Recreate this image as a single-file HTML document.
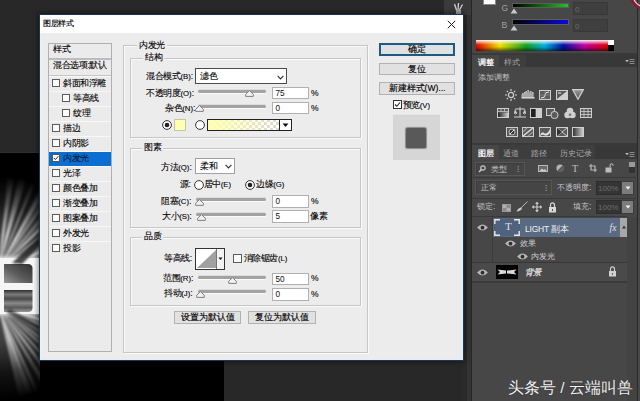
<!DOCTYPE html>
<html><head><meta charset="utf-8">
<style>
*{margin:0;padding:0;box-sizing:border-box}
html,body{width:640px;height:401px;overflow:hidden;background:#282828;font-family:"Liberation Sans",sans-serif;}
.a{position:absolute}
.t{position:absolute;white-space:nowrap;font-size:8.5px;line-height:9px;color:#000;font-weight:500;-webkit-text-stroke:0.1px #000;letter-spacing:-0.4px}
.k{font-size:7.8px;letter-spacing:0}
.p{position:absolute;white-space:nowrap;font-size:8.3px;line-height:9px;color:#c8c8c8;font-weight:500}
.gb{position:absolute;border:1px solid #c6c6c6;box-shadow:inset 1px 1px 0 #fafafa,1px 1px 0 #fafafa}
.gl{position:absolute;background:#ececec;padding:0 2px;font-size:8.5px;line-height:9px;color:#000;white-space:nowrap;font-weight:500;-webkit-text-stroke:0.1px #000;letter-spacing:-0.4px}
.cb{position:absolute;width:8px;height:8px;border:1px solid #5c5c5c;background:#fbfbfb}
.inp{position:absolute;background:#fff;border:1px solid #b0b0b0;font-size:8.2px;line-height:11.5px;padding-left:2.5px;color:#111}
.btn{position:absolute;background:#e1e1e1;border:1px solid #b2b2b2;font-size:8.5px;line-height:11px;text-align:center;color:#000;font-weight:500;-webkit-text-stroke:0.15px #000}
.trk{position:absolute;height:3px;background:#a6a6a6;border-radius:1px;box-shadow:0 1px 0 #fafafa}
</style></head><body>
<div class="a" style="left:0px;top:153px;width:224px;height:248px;background:#000"></div>
<div class="a" style="left:0px;top:152px;width:224px;height:1px;background:#303030"></div>
<svg class="a" style="left:0;top:152px" width="40" height="249" viewBox="0 152 40 249">
<defs>
<radialGradient id="rgu" cx="0" cy="268" r="92" gradientUnits="userSpaceOnUse">
<stop offset="0" stop-color="#fff" stop-opacity="1"/><stop offset="0.35" stop-color="#fff" stop-opacity="0.9"/>
<stop offset="0.7" stop-color="#fff" stop-opacity="0.3"/><stop offset="1" stop-color="#fff" stop-opacity="0"/></radialGradient>
<radialGradient id="rgl" cx="0" cy="308" r="92" gradientUnits="userSpaceOnUse">
<stop offset="0" stop-color="#fff" stop-opacity="1"/><stop offset="0.35" stop-color="#fff" stop-opacity="0.85"/>
<stop offset="0.7" stop-color="#fff" stop-opacity="0.25"/><stop offset="1" stop-color="#fff" stop-opacity="0"/></radialGradient>
<filter id="bl" x="-50%" y="-50%" width="200%" height="200%"><feGaussianBlur stdDeviation="1.0"/></filter>
<filter id="bl2" x="-50%" y="-50%" width="200%" height="200%"><feGaussianBlur stdDeviation="2"/></filter>
<linearGradient id="ub" x1="0" y1="1" x2="1" y2="0"><stop offset="0" stop-color="#9a9a9a"/><stop offset="0.45" stop-color="#5c5c5c"/><stop offset="1" stop-color="#303030"/></linearGradient>
<linearGradient id="lb" x1="0" y1="0" x2="0" y2="1"><stop offset="0" stop-color="#2e2e2e"/><stop offset="0.2" stop-color="#7a7a7a"/><stop offset="0.4" stop-color="#4a4a4a"/><stop offset="0.6" stop-color="#8a8a8a"/><stop offset="0.8" stop-color="#5a5a5a"/><stop offset="1" stop-color="#9a9a9a"/></linearGradient>
</defs>
<rect x="0" y="152" width="40" height="136" fill="url(#rgu)" opacity="0.3"/>
<rect x="0" y="288" width="40" height="113" fill="url(#rgl)" opacity="0.3"/>
<g filter="url(#bl)" fill="url(#rgu)"><path opacity="0.88" d="M-2 270L15.1 110.9L25.4 112.4Z"/><path opacity="0.88" d="M-2 270L32.8 113.8L45.3 117.2Z"/><path opacity="0.76" d="M-2 270L55.6 120.7L61.0 122.9Z"/><path opacity="0.96" d="M-2 270L72.1 128.2L81.3 133.4Z"/><path opacity="0.66" d="M-2 270L84.4 135.3L92.0 140.5Z"/><path opacity="0.56" d="M-2 270L97.9 145.0L105.6 151.6Z"/><path opacity="0.96" d="M-2 270L109.6 155.3L115.0 160.9Z"/><path opacity="0.91" d="M-2 270L122.7 169.7L126.8 175.1Z"/><path opacity="0.61" d="M-2 270L129.8 179.3L135.4 188.0Z"/><path opacity="0.64" d="M-2 270L136.0 189.0L141.9 200.0Z"/><path opacity="0.94" d="M-2 270L142.5 201.4L147.7 213.6Z"/></g>
<g filter="url(#bl)" fill="url(#rgl)"><path opacity="0.79" d="M-2 306L152.1 349.2L148.0 361.6Z"/><path opacity="0.97" d="M-2 306L145.0 369.2L142.0 375.7Z"/><path opacity="0.95" d="M-2 306L138.3 383.0L131.5 394.2Z"/><path opacity="0.62" d="M-2 306L129.1 397.8L124.1 404.5Z"/><path opacity="0.69" d="M-2 306L119.9 409.6L115.9 414.2Z"/><path opacity="0.86" d="M-2 306L107.6 422.5L103.5 426.3Z"/><path opacity="0.92" d="M-2 306L96.9 431.8L90.5 436.6Z"/><path opacity="0.77" d="M-2 306L83.3 441.3L76.4 445.5Z"/><path opacity="0.99" d="M-2 306L66.3 450.7L60.8 453.2Z"/><path opacity="0.93" d="M-2 306L57.1 454.7L46.3 458.5Z"/><path opacity="0.71" d="M-2 306L45.2 458.9L33.9 461.9Z"/></g>
<g filter="url(#bl2)"><rect x="-4" y="257" width="44" height="58" fill="#f4f4f4"/></g>
<rect x="0" y="258" width="39" height="56" fill="#f6f6f6"/>
<path d="M4 264H28Q32.5 264 32.5 268.5V283H4Z" fill="url(#ub)"/>
<path d="M4 290H32.5V307.5Q32.5 312 28 312H4Z" fill="url(#lb)"/>
<path d="M12 263L40 236L40 246L22 264Z" fill="#111" opacity="0.75" filter="url(#bl)"/>
<path d="M10 309L40 326L40 336L6 312Z" fill="#111" opacity="0.6" filter="url(#bl)"/>

</svg>
<div class="a" style="left:444px;top:0px;width:27px;height:15px;background:#3a3a3a"></div>
<div class="a" style="left:463px;top:15px;width:4px;height:386px;background:#2a2a2a"></div>
<div class="a" style="left:467px;top:15px;width:4px;height:386px;background:#333"></div>
<div class="a" style="left:471px;top:0px;width:1px;height:401px;background:#262626"></div>
<svg class="a" style="left:452px;top:2px" width="12" height="13"><path d="M4.5 8L2.5 2M6 8L6.5 1M7.5 8L10.5 2.5" stroke="#d0d0d0" stroke-width="1.3"/><rect x="4" y="8" width="5" height="5" fill="#a0a0a0"/></svg>
<div class="a" style="left:472px;top:0px;width:165px;height:401px;background:#474747"></div>
<div class="a" style="left:637px;top:0px;width:1px;height:401px;background:#2a2a2a"></div>
<div class="a" style="left:638px;top:0px;width:2px;height:401px;background:#484848"></div>
<div class="a" style="left:39px;top:14px;width:425px;height:347px;background:#ececec;border:1px solid #1d3550;box-shadow:0 0 5px 1px rgba(0,0,0,0.45),inset -1px -1px 0 #dfeef6,inset 1px 0 0 #e2f3f5"></div>
<div class="a" style="left:40px;top:15px;width:423px;height:18px;background:#fff"></div>
<div class="t" style="left:43px;top:19px;font-size:8.2px;-webkit-text-stroke:0.15px #000;color:#000">图层样式</div>
<svg class="a" style="left:447px;top:20px" width="9" height="9" viewBox="0 0 9 9"><path d="M0.8 0.8L8.2 8.2M8.2 0.8L0.8 8.2" stroke="#1a1a1a" stroke-width="1"/></svg>
<div class="a" style="left:48px;top:43px;width:64px;height:309px;background:#ebebeb;border:1px solid #b0b0b0"></div>
<div class="t" style="left:53px;top:45px;">样式</div>
<div class="a" style="left:49px;top:58px;width:62px;height:2px;background:#bcbcbc"></div>
<div class="t" style="left:53px;top:61px;">混合选项:默认</div>
<div class="a" style="left:49px;top:75px;width:62px;height:1px;background:#c6c6c6"></div>
<div class="a" style="left:49px;top:76px;width:62px;height:1px;background:#f8f8f8"></div>
<div class="cb" style="left:52px;top:79px;"></div>
<div class="t" style="left:63px;top:79px;">斜面和浮雕</div>
<div class="a" style="left:49px;top:91px;width:62px;height:1px;background:#f8f8f8"></div>
<div class="cb" style="left:62px;top:94px;"></div>
<div class="t" style="left:73px;top:94px;">等高线</div>
<div class="a" style="left:49px;top:106px;width:62px;height:1px;background:#f8f8f8"></div>
<div class="cb" style="left:62px;top:109px;"></div>
<div class="t" style="left:73px;top:109px;">纹理</div>
<div class="a" style="left:49px;top:121px;width:62px;height:1px;background:#f8f8f8"></div>
<div class="cb" style="left:52px;top:124px;"></div>
<div class="t" style="left:63px;top:124px;">描边</div>
<div class="a" style="left:49px;top:136px;width:62px;height:1px;background:#f8f8f8"></div>
<div class="cb" style="left:52px;top:139px;"></div>
<div class="t" style="left:63px;top:139px;">内阴影</div>
<div class="a" style="left:49px;top:151px;width:62px;height:1px;background:#f8f8f8"></div>
<div class="a" style="left:49px;top:152px;width:62px;height:14px;background:#0a6fd1"></div>
<svg class="a" style="left:52px;top:154px" width="8" height="8"><rect x="0.5" y="0.5" width="7" height="7" fill="#fff" stroke="#555"/><path d="M1.8 4L3.4 5.6L6.3 2.2" stroke="#333" stroke-width="1" fill="none"/></svg>
<div class="t" style="left:63px;top:154px;color:#062b55">内发光</div>
<div class="a" style="left:49px;top:166px;width:62px;height:1px;background:#f8f8f8"></div>
<div class="cb" style="left:52px;top:169px;"></div>
<div class="t" style="left:63px;top:169px;">光泽</div>
<div class="a" style="left:49px;top:181px;width:62px;height:1px;background:#f8f8f8"></div>
<div class="cb" style="left:52px;top:184px;"></div>
<div class="t" style="left:63px;top:184px;">颜色叠加</div>
<div class="a" style="left:49px;top:196px;width:62px;height:1px;background:#f8f8f8"></div>
<div class="cb" style="left:52px;top:199px;"></div>
<div class="t" style="left:63px;top:199px;">渐变叠加</div>
<div class="a" style="left:49px;top:211px;width:62px;height:1px;background:#f8f8f8"></div>
<div class="cb" style="left:52px;top:214px;"></div>
<div class="t" style="left:63px;top:214px;">图案叠加</div>
<div class="a" style="left:49px;top:226px;width:62px;height:1px;background:#f8f8f8"></div>
<div class="cb" style="left:52px;top:229px;"></div>
<div class="t" style="left:63px;top:229px;">外发光</div>
<div class="a" style="left:49px;top:241px;width:62px;height:1px;background:#f8f8f8"></div>
<div class="cb" style="left:52px;top:244px;"></div>
<div class="t" style="left:63px;top:244px;">投影</div>
<div class="gb" style="left:123px;top:45px;width:245px;height:308px"></div>
<div class="gl" style="left:137px;top:41px;">内发光</div>
<div class="gb" style="left:130px;top:58px;width:231px;height:80px"></div>
<div class="gl" style="left:143px;top:53px;">结构</div>
<div class="gb" style="left:130px;top:148px;width:231px;height:80px"></div>
<div class="gl" style="left:142px;top:143px;">图素</div>
<div class="gb" style="left:130px;top:237px;width:231px;height:69px"></div>
<div class="gl" style="left:142px;top:232px;">品质</div>
<div class="t" style="left:146px;top:72px;">混合模式<span class="k">(B)</span>:</div>
<div class="a" style="left:195px;top:68px;width:92px;height:16px;background:#fff;border:1px solid #4a4a4a"></div>
<div class="t" style="left:200px;top:72px;">滤色</div>
<svg class="a" style="left:277px;top:75px" width="7" height="5" viewBox="0 0 7 5"><path d="M0.6 0.9L3.5 3.8L6.4 0.9" stroke="#333" stroke-width="1.2" fill="none"/></svg>
<div class="t" style="left:146px;top:89px;">不透明度<span class="k">(O)</span>:</div>
<div class="a" style="left:198px;top:89.5px;width:68px;height:3px;background:#a2a2a2;border-radius:1.5px;box-shadow:0 1px 0 #fbfbfb,0 -1px 0 #dcdcdc"></div>
<svg class="a" style="left:245px;top:90px" width="9" height="7" viewBox="0 0 9 7"><path d="M4.5 0.6L8.3 4.2V6.4H0.7V4.2Z" fill="#f0f0f0" stroke="#808080" stroke-width="1" stroke-linejoin="round"/></svg>
<div class="inp" style="left:272px;top:87px;width:37px;height:12px">75</div>
<div class="t" style="left:311px;top:89px;">%</div>
<div class="t" style="left:165px;top:104px;">杂色<span class="k">(N)</span>:</div>
<div class="a" style="left:198px;top:104.5px;width:68px;height:3px;background:#a2a2a2;border-radius:1.5px;box-shadow:0 1px 0 #fbfbfb,0 -1px 0 #dcdcdc"></div>
<svg class="a" style="left:195px;top:105px" width="9" height="7" viewBox="0 0 9 7"><path d="M4.5 0.6L8.3 4.2V6.4H0.7V4.2Z" fill="#f0f0f0" stroke="#808080" stroke-width="1" stroke-linejoin="round"/></svg>
<div class="inp" style="left:272px;top:102px;width:37px;height:12px">0</div>
<div class="t" style="left:311px;top:104px;">%</div>
<svg class="a" style="left:162px;top:120px" width="10" height="10" viewBox="0 0 10 10"><circle cx="5" cy="5" r="4.4" fill="#fff" stroke="#333" stroke-width="1"/><circle cx="5" cy="5" r="2.3" fill="#222"/></svg>
<div class="a" style="left:174px;top:119px;width:12px;height:12px;background:#ffffb4;border:1px solid #c8c8a0"></div>
<svg class="a" style="left:195px;top:120px" width="10" height="10" viewBox="0 0 10 10"><circle cx="5" cy="5" r="4.4" fill="#fff" stroke="#333" stroke-width="1"/></svg>
<svg class="a" style="left:207px;top:119px" width="85" height="12" viewBox="0 0 85 12">
<defs><pattern id="ck" width="6" height="6" patternUnits="userSpaceOnUse"><rect width="6" height="6" fill="#fff"/><rect width="3" height="3" fill="#d8d8d8"/><rect x="3" y="3" width="3" height="3" fill="#d8d8d8"/></pattern>
<linearGradient id="yg" x1="0" x2="1"><stop offset="0" stop-color="#ffffb0" stop-opacity="1"/><stop offset="1" stop-color="#ffffb0" stop-opacity="0"/></linearGradient></defs>
<rect x="0.5" y="0.5" width="72" height="11" fill="url(#ck)"/><rect x="0.5" y="0.5" width="72" height="11" fill="url(#yg)"/>
<rect x="0.5" y="0.5" width="84" height="11" fill="none" stroke="#222"/>
<path d="M72.5 0.5V11.5" stroke="#222"/><rect x="73" y="1" width="11" height="10" fill="#fff"/>
<path d="M75.5 4.5H81.5L78.5 8Z" fill="#111"/></svg>
<div class="t" style="left:161px;top:163px;">方法<span class="k">(Q)</span>:</div>
<div class="a" style="left:195px;top:158px;width:40px;height:16px;background:#fff;border:1px solid #a0a0a0"></div>
<div class="t" style="left:200px;top:162px;">柔和</div>
<svg class="a" style="left:225px;top:164px" width="7" height="5" viewBox="0 0 7 5"><path d="M0.6 0.9L3.5 3.8L6.4 0.9" stroke="#333" stroke-width="1.2" fill="none"/></svg>
<div class="t" style="left:180px;top:180px;">源:</div>
<svg class="a" style="left:194px;top:180px" width="10" height="10" viewBox="0 0 10 10"><circle cx="5" cy="5" r="4.4" fill="#fff" stroke="#333" stroke-width="1"/></svg>
<div class="t" style="left:203.5px;top:180px;">居中<span class="k">(E)</span></div>
<svg class="a" style="left:245px;top:180px" width="10" height="10" viewBox="0 0 10 10"><circle cx="5" cy="5" r="4.4" fill="#fff" stroke="#333" stroke-width="1"/><circle cx="5" cy="5" r="2.3" fill="#222"/></svg>
<div class="t" style="left:256px;top:180px;">边缘<span class="k">(G)</span></div>
<div class="t" style="left:161px;top:197px;">阻塞<span class="k">(C)</span>:</div>
<div class="a" style="left:196px;top:197.7px;width:70px;height:3px;background:#a2a2a2;border-radius:1.5px;box-shadow:0 1px 0 #fbfbfb,0 -1px 0 #dcdcdc"></div>
<svg class="a" style="left:195px;top:199px" width="9" height="7" viewBox="0 0 9 7"><path d="M4.5 0.6L8.3 4.2V6.4H0.7V4.2Z" fill="#f0f0f0" stroke="#808080" stroke-width="1" stroke-linejoin="round"/></svg>
<div class="inp" style="left:272px;top:195px;width:37px;height:13px">0</div>
<div class="t" style="left:311px;top:196.5px;">%</div>
<div class="t" style="left:162px;top:212px;">大小<span class="k">(S)</span>:</div>
<div class="a" style="left:196px;top:212.7px;width:70px;height:3px;background:#a2a2a2;border-radius:1.5px;box-shadow:0 1px 0 #fbfbfb,0 -1px 0 #dcdcdc"></div>
<svg class="a" style="left:197px;top:214px" width="9" height="7" viewBox="0 0 9 7"><path d="M4.5 0.6L8.3 4.2V6.4H0.7V4.2Z" fill="#f0f0f0" stroke="#808080" stroke-width="1" stroke-linejoin="round"/></svg>
<div class="inp" style="left:272px;top:210px;width:37px;height:13px">5</div>
<div class="t" style="left:310px;top:212px;">像素</div>
<div class="t" style="left:164px;top:254px;">等高线:</div>
<svg class="a" style="left:195px;top:248px" width="30" height="22" viewBox="0 0 30 22">
<rect x="0.5" y="0.5" width="29" height="21" fill="#fff" stroke="#333"/>
<path d="M2 20L21 2V20Z" fill="#a0a0a0"/>
<rect x="21.5" y="1" width="7.5" height="20" fill="#f2f2f2"/><path d="M21.5 1V21" stroke="#777"/><path d="M23.5 9.5H27.5L25.5 12Z" fill="#111"/></svg>
<div class="cb" style="left:233px;top:254px;width:9px;height:9px"></div>
<div class="t" style="left:243.5px;top:254px;">消除锯齿<span class="k">(L)</span></div>
<div class="t" style="left:163px;top:274px;">范围<span class="k">(R)</span>:</div>
<div class="a" style="left:198px;top:275.5px;width:68px;height:3px;background:#a2a2a2;border-radius:1.5px;box-shadow:0 1px 0 #fbfbfb,0 -1px 0 #dcdcdc"></div>
<svg class="a" style="left:228px;top:277px" width="9" height="7" viewBox="0 0 9 7"><path d="M4.5 0.6L8.3 4.2V6.4H0.7V4.2Z" fill="#f0f0f0" stroke="#808080" stroke-width="1" stroke-linejoin="round"/></svg>
<div class="inp" style="left:272px;top:273px;width:37px;height:12px">50</div>
<div class="t" style="left:311px;top:274px;">%</div>
<div class="t" style="left:164px;top:289px;">抖动<span class="k">(J)</span>:</div>
<div class="a" style="left:198px;top:290px;width:68px;height:3px;background:#a2a2a2;border-radius:1.5px;box-shadow:0 1px 0 #fbfbfb,0 -1px 0 #dcdcdc"></div>
<svg class="a" style="left:196px;top:291px" width="9" height="7" viewBox="0 0 9 7"><path d="M4.5 0.6L8.3 4.2V6.4H0.7V4.2Z" fill="#f0f0f0" stroke="#808080" stroke-width="1" stroke-linejoin="round"/></svg>
<div class="inp" style="left:272px;top:288px;width:37px;height:13px">0</div>
<div class="t" style="left:311px;top:289.5px;">%</div>
<div class="btn" style="left:174px;top:311px;width:67px;height:13px">设置为默认值</div>
<div class="btn" style="left:248px;top:311px;width:68px;height:13px">复位为默认值</div>
<div class="btn" style="left:379px;top:43px;width:76px;height:13px;border:2px solid #235a7c;box-shadow:inset 0 0 0 1px #cfe6f2;line-height:9px">确定</div>
<div class="btn" style="left:379px;top:63px;width:76px;height:12px">复位</div>
<div class="btn" style="left:379px;top:82px;width:76px;height:13px">新建样式(W)...</div>
<svg class="a" style="left:393px;top:100px" width="9" height="9"><rect x="0.5" y="0.5" width="8" height="8" fill="#fff" stroke="#333"/><path d="M2 4.5L3.8 6.3L7 2.5" stroke="#222" stroke-width="1.1" fill="none"/></svg>
<div class="t" style="left:402.5px;top:100.5px;">预览<span class="k">(V)</span></div>
<div class="a" style="left:393px;top:114px;width:47px;height:46px;background:#d6d6d6;border-top:1px solid #e4e4e4"></div>
<div class="a" style="left:406px;top:128px;width:20px;height:20px;background:#595959;border-radius:1.5px;box-shadow:0 0 1px 1px #8a8a8a"></div>
<div class="a" style="left:483px;top:0px;width:13px;height:5px;background:#fff;border:1px solid #888;border-top:0"></div>
<div class="p" style="left:501.5px;top:4px;font-size:8.5px;line-height:9px;color:#a0a0a0">G</div>
<div class="a" style="left:512px;top:3px;width:57px;height:5px;background:linear-gradient(90deg,#000,#23c223);border:1px solid #5c5c5c"></div>
<svg class="a" style="left:510px;top:8px" width="8" height="6"><path d="M4 0.5L7.5 5.5H0.5Z" fill="#c8c8c8"/></svg>
<div class="a" style="left:573px;top:2px;width:35px;height:13px;background:#3f3f3f;border:1px solid #383838"></div>
<div class="p" style="left:575px;top:5px;font-size:8px;color:#6a6a6a">0</div>
<div class="p" style="left:501.5px;top:21px;font-size:8.5px;line-height:9px;color:#a0a0a0">B</div>
<div class="a" style="left:512px;top:19px;width:57px;height:6px;background:linear-gradient(90deg,#000,#0a0ae0);border:1px solid #5c5c5c"></div>
<svg class="a" style="left:510px;top:25px" width="8" height="6"><path d="M4 0.5L7.5 5.5H0.5Z" fill="#c8c8c8"/></svg>
<div class="a" style="left:573px;top:19px;width:35px;height:13px;background:#3f3f3f;border:1px solid #383838"></div>
<div class="p" style="left:575px;top:22px;font-size:8px;color:#6a6a6a">0</div>
<div class="a" style="left:476px;top:40px;width:132px;height:11px;background:linear-gradient(90deg,#e00000 0%,#f0e000 18%,#10a020 38%,#00b0e0 52%,#0010a0 66%,#c000a0 82%,#e00000 100%)"></div>
<div class="a" style="left:476px;top:40px;width:132px;height:11px;background:linear-gradient(180deg,rgba(255,255,255,.95) 0%,rgba(255,255,255,0) 45%,rgba(0,0,0,0) 60%,rgba(0,0,0,.6) 100%)"></div>
<div class="a" style="left:608px;top:40px;width:6px;height:5px;background:#fff"></div>
<div class="a" style="left:608px;top:45px;width:6px;height:6px;background:#000"></div>
<svg class="a" style="left:626px;top:0" width="14" height="14"><circle cx="20" cy="-6" r="15" stroke="#8a1a30" stroke-width="3.2" fill="none"/><circle cx="20" cy="-6" r="13.2" stroke="#f0d0d8" stroke-width="1.2" fill="none"/></svg>
<div class="a" style="left:472px;top:53px;width:165px;height:1px;background:#3a3a3a"></div>
<div class="a" style="left:472px;top:54px;width:165px;height:13px;background:#383838"></div>
<div class="a" style="left:472px;top:55px;width:27px;height:12px;background:#474747"></div>
<div class="a" style="left:499px;top:55px;width:27px;height:12px;background:#3e3e3e"></div>
<div class="p" style="left:478px;top:58px;color:#f0f0f0;font-weight:700">调整</div>
<div class="p" style="left:504px;top:58px;color:#a8a8a8">样式</div>
<svg class="a" style="left:625px;top:59px" width="10" height="5"><path d="M0.3 1H3.7L2 3.2Z" fill="#c8c8c8"/><rect x="4.5" y="0" width="5" height="1" fill="#8a8a8a"/><rect x="4.5" y="2" width="5" height="1" fill="#8a8a8a"/><rect x="4.5" y="4" width="5" height="1" fill="#8a8a8a"/></svg>
<div class="p" style="left:478px;top:73px;color:#c0c0c0">添加调整</div>
<svg class="a" style="left:505px;top:89px" width="12" height="12" viewBox="0 0 12 12"><circle cx="6" cy="6" r="2.6" fill="none" stroke="#d0d0d0" stroke-width="1.2"/><g stroke="#d0d0d0" stroke-width="1.2"><path d="M6 0V2M6 10V12M0 6H2M10 6H12M1.8 1.8L3 3M9 9L10.2 10.2M1.8 10.2L3 9M9 3L10.2 1.8"/></g></svg>
<svg class="a" style="left:521px;top:89px" width="14" height="10" viewBox="0 0 14 10"><path d="M1 8V6L2 4V8M3 8V5L4 3V8M5 8V2L6 4V8M7 8V1L8 3V8M9 8V4L10 2V8M11 8V5L12 3V8" stroke="#c8c8c8" stroke-width="1" fill="none"/><rect x="0.5" y="8" width="13" height="1.6" fill="#d0d0d0"/></svg>
<svg class="a" style="left:539px;top:90px" width="12" height="10" viewBox="0 0 12 10"><rect x="0.5" y="0.5" width="11" height="9" fill="#5a5a5a" stroke="#cfcfcf"/><path d="M2 8Q6 8 6 5Q6 2 10 2" stroke="#eee" fill="none"/><path d="M0.5 5H11.5M6 0.5V9.5" stroke="#999" stroke-width="0.6"/></svg>
<svg class="a" style="left:556px;top:90px" width="12" height="10" viewBox="0 0 12 10"><rect x="0.5" y="0.5" width="11" height="9" fill="#5a5a5a" stroke="#cfcfcf"/><path d="M1 9L11 1V9Z" fill="#d0d0d0"/><path d="M2 3H5" stroke="#eee"/></svg>
<svg class="a" style="left:572px;top:89px" width="12" height="11" viewBox="0 0 12 11"><defs><linearGradient id="vg" x1="0" y1="0" x2="0" y2="1"><stop offset="0" stop-color="#999"/><stop offset="1" stop-color="#555"/></linearGradient></defs><path d="M0.7 0.7H11.3L6 10.3Z" fill="url(#vg)" stroke="#d0d0d0" stroke-width="1.2"/></svg>
<svg class="a" style="left:497px;top:108px" width="12" height="10" viewBox="0 0 12 10"><rect x="0.5" y="0.5" width="11" height="9" fill="#5a5a5a" stroke="#cfcfcf"/><defs><linearGradient id="g20"><stop offset="0" stop-color="#222"/><stop offset="1" stop-color="#ccc"/></linearGradient></defs><path d="M1 3.5H11M4 1V3.5M7.5 1V3.5" stroke="#c8c8c8" stroke-width="0.8"/><rect x="1" y="4.5" width="10" height="4.5" fill="url(#g20)"/></svg>
<svg class="a" style="left:514px;top:107px" width="12" height="11" viewBox="0 0 12 11"><path d="M6 0V10M1 2H11M0 10H12" stroke="#d0d0d0"/><path d="M1 2L0 6H3Z M11 2L9 6H12Z" fill="#d0d0d0"/><path d="M0 6Q1.5 8 3 6 M9 6Q10.5 8 12 6" stroke="#d0d0d0" fill="none"/></svg>
<svg class="a" style="left:530px;top:108px" width="12" height="10" viewBox="0 0 12 10"><rect x="0.5" y="0.5" width="11" height="9" fill="#5a5a5a" stroke="#cfcfcf"/><rect x="1" y="1" width="4" height="8" fill="#222"/><rect x="6" y="1" width="5" height="8" fill="#ccc"/></svg>
<svg class="a" style="left:546px;top:107px" width="13" height="12" viewBox="0 0 13 12"><rect x="0.5" y="1.5" width="8" height="7" fill="#5a5a5a" stroke="#d0d0d0"/><circle cx="8.5" cy="8" r="3.6" fill="#5a5a5a" stroke="#d0d0d0"/></svg>
<svg class="a" style="left:564px;top:107px" width="12" height="12" viewBox="0 0 12 12"><circle cx="6" cy="4" r="3.3" fill="#d0d0d0"/><circle cx="3.6" cy="8" r="3.3" fill="#d0d0d0"/><circle cx="8.4" cy="8" r="3.3" fill="#d0d0d0"/><path d="M6 6L4.5 8.5H7.5Z" fill="#555"/></svg>
<svg class="a" style="left:580px;top:108px" width="12" height="10" viewBox="0 0 12 10"><rect x="0.5" y="0.5" width="11" height="9" fill="#5a5a5a" stroke="#cfcfcf"/><path d="M0.5 3.5H11.5M0.5 6.5H11.5M4 0.5V9.5M8 0.5V9.5" stroke="#cfcfcf" stroke-width="0.8"/></svg>
<svg class="a" style="left:506px;top:127px" width="12" height="10" viewBox="0 0 12 10"><rect x="0.5" y="0.5" width="11" height="9" fill="#5a5a5a" stroke="#cfcfcf"/><circle cx="6" cy="5" r="3" fill="#333" stroke="#ddd" stroke-width="0.8"/><path d="M3.5 7.5L8.5 2.5" stroke="#ddd"/></svg>
<svg class="a" style="left:522px;top:127px" width="12" height="10" viewBox="0 0 12 10"><rect x="0.5" y="0.5" width="11" height="9" fill="#5a5a5a" stroke="#cfcfcf"/><path d="M1 9L11 1" stroke="#ddd" stroke-width="1.6"/><path d="M1 5L5 1M6 9L11 5" stroke="#999" stroke-width="1.4"/></svg>
<svg class="a" style="left:539px;top:127px" width="12" height="10" viewBox="0 0 12 10"><rect x="0.5" y="0.5" width="11" height="9" fill="#5a5a5a" stroke="#cfcfcf"/><path d="M1 8Q3 4 5 6Q8 8 11 2V6Q8 10 5 8Q3 7 1 9Z" fill="#ddd"/></svg>
<svg class="a" style="left:556px;top:127px" width="12" height="10" viewBox="0 0 12 10"><rect x="0.5" y="0.5" width="11" height="9" fill="#5a5a5a" stroke="#cfcfcf"/><path d="M1 1L11 9M11 1L1 9" stroke="#ccc"/><path d="M1 1L6 5L1 9Z" fill="#333"/></svg>
<svg class="a" style="left:572px;top:127px" width="12" height="10" viewBox="0 0 12 10"><rect x="0.5" y="0.5" width="11" height="9" fill="#5a5a5a" stroke="#cfcfcf"/><defs><linearGradient id="g34"><stop offset="0" stop-color="#333"/><stop offset="1" stop-color="#ccc"/></linearGradient></defs><rect x="1" y="1" width="10" height="8" fill="url(#g34)"/></svg>
<div class="a" style="left:472px;top:143px;width:165px;height:2px;background:#3a3a3a"></div>
<div class="a" style="left:472px;top:145px;width:165px;height:14px;background:#383838"></div>
<div class="a" style="left:472px;top:145px;width:27px;height:14px;background:#474747"></div>
<div class="p" style="left:478px;top:149px;color:#f0f0f0;font-weight:700">图层</div>
<div class="a" style="left:499px;top:145px;width:27px;height:14px;background:#3e3e3e"></div>
<div class="p" style="left:503px;top:149px;color:#a8a8a8">通道</div>
<div class="a" style="left:526px;top:145px;width:28px;height:14px;background:#3e3e3e"></div>
<div class="p" style="left:531px;top:149px;color:#a8a8a8">路径</div>
<div class="a" style="left:554px;top:145px;width:41px;height:14px;background:#3e3e3e"></div>
<div class="p" style="left:560px;top:149px;color:#a8a8a8">历史记录</div>
<svg class="a" style="left:625px;top:152px" width="10" height="5"><path d="M0.3 1H3.7L2 3.2Z" fill="#c8c8c8"/><rect x="4.5" y="0" width="5" height="1" fill="#8a8a8a"/><rect x="4.5" y="2" width="5" height="1" fill="#8a8a8a"/><rect x="4.5" y="4" width="5" height="1" fill="#8a8a8a"/></svg>
<div class="a" style="left:475px;top:162px;width:50px;height:14px;background:#454545;border:1px solid #565656;box-shadow:inset 1px 1px 0 #3c3c3c"></div>
<svg class="a" style="left:478px;top:165px" width="8" height="8"><circle cx="5" cy="3" r="2.2" fill="none" stroke="#ccc" stroke-width="1.2"/><path d="M3.5 4.5L1 7" stroke="#ccc" stroke-width="1.4"/></svg>
<div class="p" style="left:491px;top:165px;color:#c4c4c4">类型</div>
<div class="p" style="left:517px;top:165px;color:#bbb">⁝</div>
<svg class="a" style="left:538px;top:165px" width="10" height="7" viewBox="0 0 10 7"><rect x="0.5" y="0.5" width="9" height="6" fill="#6a6a6a" stroke="#b8b8b8"/><path d="M1.5 6L4 3.5L5.5 5L7 4L8.5 6Z" fill="#d0d0d0"/></svg>
<svg class="a" style="left:556px;top:164px" width="8" height="8"><circle cx="4" cy="4" r="3.6" fill="#b4b4b4"/><path d="M4 0.4A3.6 3.6 0 0 1 4 7.6Z" fill="#5a5a5a" transform="rotate(45 4 4)"/></svg>
<div class="p" style="left:572px;top:163.5px;font-family:'Liberation Serif',serif;font-size:10px;color:#c0c0c0">T</div>
<svg class="a" style="left:589px;top:164px" width="8" height="8"><path d="M2 0V6H8M0 2H6V8" stroke="#b8b8b8" stroke-width="1.2" fill="none"/></svg>
<svg class="a" style="left:605px;top:163px" width="9" height="10"><path d="M5 4.5V2.8Q5 0.8 6.6 0.8Q8.2 0.8 8.2 2.8" stroke="#bdbdbd" stroke-width="1.1" fill="none"/><rect x="0.5" y="4.5" width="6" height="5" fill="#bdbdbd"/></svg>
<div class="a" style="left:629px;top:162px;width:6px;height:11px;background:linear-gradient(180deg,#9a9a9a 0 45%,#333 45% 100%)"></div>
<div class="a" style="left:472px;top:177px;width:164px;height:1px;background:#393939"></div>
<div class="a" style="left:475px;top:180px;width:77px;height:15px;background:#454545;border:1px solid #565656;box-shadow:inset 1px 1px 0 #3c3c3c"></div>
<div class="p" style="left:481px;top:183px;color:#c4c4c4">正常</div>
<div class="p" style="left:545px;top:184px;color:#bbb">⁝</div>
<div class="p" style="left:557px;top:183px;color:#c4c4c4">不透明度:</div>
<div class="a" style="left:596px;top:181px;width:25px;height:14px;background:#353535;border:1px solid #2e2e2e"></div>
<div class="p" style="left:598px;top:184px;color:#6e6e6e;font-size:8px">100%</div>
<div class="a" style="left:621px;top:181px;width:13px;height:14px;background:#7c7c7c;border:1px solid #3a3a3a"></div>
<svg class="a" style="left:625px;top:186px" width="6" height="4"><path d="M0.5 0.5H5.5L3 3.5Z" fill="#f4f4f4"/></svg>
<div class="a" style="left:472px;top:198px;width:164px;height:1px;background:#393939"></div>
<div class="p" style="left:477px;top:202px;color:#c4c4c4">锁定:</div>
<svg class="a" style="left:502px;top:204px" width="9" height="8"><rect x="0.5" y="0.5" width="8" height="7" fill="#8a8a8a" stroke="#9a9a9a"/><rect x="1" y="1" width="3.5" height="3" fill="#b0b0b0"/><rect x="4.5" y="4" width="3.5" height="3" fill="#b0b0b0"/></svg>
<svg class="a" style="left:516px;top:201px" width="12" height="11"><path d="M11.5 0.5L5 7" stroke="#b8b8b8" stroke-width="1"/><path d="M0.5 10.5Q2 7 5 6.5L6 7.5Q5 10 0.5 10.5Z" fill="#c8c8c8"/></svg>
<svg class="a" style="left:532px;top:202px" width="10" height="10"><path d="M5 0V10M0 5H10" stroke="#c8c8c8" stroke-width="1.2"/><path d="M5 0L3 2H7ZM5 10L3 8H7ZM0 5L2 3V7ZM10 5L8 3V7Z" fill="#c8c8c8"/></svg>
<svg class="a" style="left:548px;top:202px" width="9" height="11"><path d="M2.5 5V3Q2.5 0.8 4.5 0.8Q6.5 0.8 6.5 3V5" stroke="#d8d8d8" stroke-width="1.2" fill="none"/><rect x="1" y="5" width="7" height="5.5" fill="#d8d8d8"/><rect x="4" y="7" width="1" height="2" fill="#555"/></svg>
<div class="p" style="left:573px;top:202px;color:#c4c4c4">填充:</div>
<div class="a" style="left:596px;top:200px;width:25px;height:14px;background:#353535;border:1px solid #2e2e2e"></div>
<div class="p" style="left:598px;top:203px;color:#6e6e6e;font-size:8px">100%</div>
<div class="a" style="left:621px;top:200px;width:13px;height:14px;background:#7c7c7c;border:1px solid #3a3a3a"></div>
<svg class="a" style="left:625px;top:205px" width="6" height="4"><path d="M0.5 0.5H5.5L3 3.5Z" fill="#f4f4f4"/></svg>
<div class="a" style="left:472px;top:216px;width:155px;height:1px;background:#393939"></div>
<div class="a" style="left:627px;top:217px;width:10px;height:184px;background:#434343"></div>
<div class="a" style="left:493px;top:218px;width:134px;height:19px;background:#596a82"></div>
<div class="a" style="left:620px;top:218px;width:7px;height:19px;background:#a8a8a8"></div>
<svg class="a" style="left:622px;top:225px" width="4" height="4"><path d="M0 3.5L2 0.5L4 3.5Z" fill="#333"/></svg>
<div class="a" style="left:492px;top:217px;width:1px;height:65px;background:#3b3b3b"></div>
<svg class="a" style="left:477px;top:224px" width="11" height="7" viewBox="0 0 11 7"><path d="M0.6 3.5Q5.5 -1.6 10.4 3.5Q5.5 8.6 0.6 3.5Z" fill="#b8b8b8" stroke="#c8c8c8" stroke-width="0.8"/><circle cx="5.5" cy="3.7" r="1.9" fill="#2e2e2e"/></svg>
<svg class="a" style="left:494px;top:219px" width="26" height="17" viewBox="0 0 26 17"><rect x="0" y="0" width="26" height="17" fill="#50637e"/><path d="M0.8 5V0.8H6M20 0.8H25.2V5M25.2 12V16.2H20M6 16.2H0.8V12" stroke="#e8e8e8" stroke-width="1.4" fill="none"/></svg>
<div class="p" style="left:505px;top:222px;font-family:'Liberation Serif',serif;font-size:11px;color:#e0e0e0">T</div>
<div class="p" style="left:525px;top:224.5px;color:#f0f0f0;font-size:8.5px;letter-spacing:-0.2px">LIGHT 副本</div>
<div class="p" style="left:609.5px;top:224px;font-family:'Liberation Serif',serif;font-style:italic;color:#e0e0e0;font-size:9.5px">fx</div>
<svg class="a" style="left:505px;top:240px" width="11" height="7" viewBox="0 0 11 7"><path d="M0.6 3.5Q5.5 -1.6 10.4 3.5Q5.5 8.6 0.6 3.5Z" fill="#b8b8b8" stroke="#c8c8c8" stroke-width="0.8"/><circle cx="5.5" cy="3.7" r="1.9" fill="#2e2e2e"/></svg>
<div class="p" style="left:520px;top:239px;color:#d0d0d0">效果</div>
<svg class="a" style="left:517px;top:253px" width="11" height="7" viewBox="0 0 11 7"><path d="M0.6 3.5Q5.5 -1.6 10.4 3.5Q5.5 8.6 0.6 3.5Z" fill="#b8b8b8" stroke="#c8c8c8" stroke-width="0.8"/><circle cx="5.5" cy="3.7" r="1.9" fill="#2e2e2e"/></svg>
<div class="p" style="left:531px;top:251.5px;color:#d0d0d0">内发光</div>
<div class="a" style="left:472px;top:262px;width:155px;height:1px;background:#373737"></div>
<div class="a" style="left:472px;top:263px;width:155px;height:18px;background:#4a4a4a"></div>
<svg class="a" style="left:477px;top:269px" width="11" height="7" viewBox="0 0 11 7"><path d="M0.6 3.5Q5.5 -1.6 10.4 3.5Q5.5 8.6 0.6 3.5Z" fill="#b8b8b8" stroke="#c8c8c8" stroke-width="0.8"/><circle cx="5.5" cy="3.7" r="1.9" fill="#2e2e2e"/></svg>
<div class="a" style="left:496px;top:265px;width:22px;height:14px;background:#000"></div>
<svg class="a" style="left:496px;top:265px" width="22" height="14"><path d="M1.5 4.5L10 5.5V8.5L1.5 9.5L4 7Z" fill="#d8d8d8"/><path d="M20.5 4.5L11 5.5V8.5L20.5 9.5L18 7Z" fill="#d8d8d8"/></svg>
<div class="p" style="left:525px;top:268px;color:#e8e8e8;font-style:italic;-webkit-text-stroke:0.2px #e8e8e8">背景</div>
<svg class="a" style="left:608px;top:266px" width="9" height="11"><path d="M2.5 5V3Q2.5 0.8 4.5 0.8Q6.5 0.8 6.5 3V5" stroke="#d0d0d0" stroke-width="1.2" fill="none"/><rect x="1" y="5" width="7" height="5.5" fill="#d0d0d0"/><rect x="4" y="7" width="1" height="2" fill="#666"/></svg>
<div class="a" style="left:472px;top:281px;width:155px;height:2px;background:#3a3a3a"></div>
<div class="a" style="left:508px;top:378.5px;white-space:nowrap;font-size:15.5px;line-height:18px;color:#f2f2f2;font-weight:500;text-shadow:0 0 1px #222">头条号 / 云端叫兽</div>
</body></html>
